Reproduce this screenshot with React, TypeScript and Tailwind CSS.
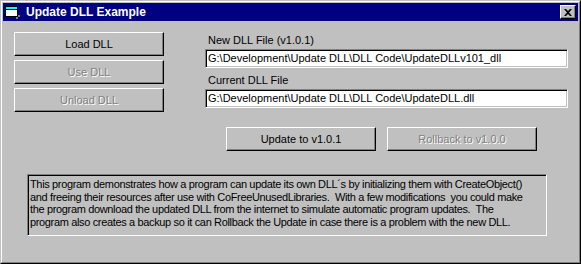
import React from "react";

const raised =
  "border border-t-white border-l-white border-r-black border-b-black shadow-[inset_-1px_-1px_0_#808080] bg-[#c0c0c0]";
const sunken =
  "border border-t-[#808080] border-l-[#808080] border-r-white border-b-white shadow-[inset_1px_1px_0_#000,inset_-1px_-1px_0_#c0c0c0]";

function Button({ label, disabled, className = "" }: { label: string; disabled?: boolean; className?: string }) {
  return (
    <div className={`${raised} flex items-center justify-center ${className}`}>
      <span
        className={
          disabled
            ? "text-[#808080] [text-shadow:1px_1px_0_#fff]"
            : "text-black"
        }
      >
        {label}
      </span>
    </div>
  );
}

function TitleIcon() {
  return (
    <svg width="16" height="14" viewBox="0 0 16 14" className="shrink-0">
      <rect x="0.5" y="1.5" width="12" height="10" fill="#fff" stroke="#000" />
      <rect x="1" y="2" width="11" height="2" fill="#00ffff" />
      <line x1="1" y1="4.5" x2="12" y2="4.5" stroke="#000" />
      <rect x="13" y="10" width="2" height="2" fill="#808080" />
      <rect x="11" y="12" width="2" height="2" fill="#808080" />
    </svg>
  );
}

const lines = [
  "This program demonstrates how a program can update its own DLL´s by initializing them with CreateObject()",
  "and freeing their resources after use with CoFreeUnusedLibraries.\u00a0 With a few modifications\u00a0 you could make",
  "the program download the updated DLL from the internet to simulate automatic program updates.\u00a0 The",
  "program also creates a backup so it can Rollback the Update in case there is a problem with the new DLL.",
];

export default function App() {
  return (
    <div className="w-[581px] h-[264px] bg-[#c0c0c0] font-['Liberation_Sans',Arial,sans-serif] text-[11px] text-black">
      <div className="w-full h-full border border-t-[#c0c0c0] border-l-[#c0c0c0] border-r-black border-b-black">
        <div className="w-full h-full border border-t-white border-l-white border-r-[#808080] border-b-[#808080] p-px flex flex-col">
          {/* Title bar */}
          <div className="h-[18px] bg-[#000080] flex items-center pl-[2px] pr-[2px]">
            <TitleIcon />
            <span className="ml-[5px] text-white font-bold text-[12px]">
              Update DLL Example
            </span>
            <div className="ml-auto w-[16px] h-[14px] border border-t-white border-l-white border-r-black border-b-black shadow-[inset_-1px_-1px_0_#808080] bg-[#c0c0c0] flex items-center justify-center">
              <svg width="8" height="7" viewBox="0 0 8 7">
                <path d="M0 0h2l2 2 2-2h2L5 3.5 8 7H6L4 5 2 7H0l3-3.5z" fill="#000" />
              </svg>
            </div>
          </div>

          {/* Body */}
          <div className="flex">
            <div className="ml-[11px] mt-[11px] flex flex-col gap-[4px]">
              <Button label="Load DLL" className="w-[150px] h-[24px]" />
              <Button label="Use DLL" disabled className="w-[150px] h-[24px]" />
              <Button label="Unload DLL" disabled className="w-[150px] h-[24px]" />
            </div>
            <div className="ml-[41px] mt-[13px] flex flex-col">
              <div className="h-[13px] leading-[13px] pl-[3px]">New DLL File (v1.0.1)</div>
              <div className={`${sunken} mt-[2px] w-[363px] h-[19px] bg-white flex items-center pl-[2px]`}>
                G:\Development\Update DLL\DLL Code\UpdateDLLv101_dll
              </div>
              <div className="h-[13px] leading-[13px] pl-[3px] mt-[6px]">Current DLL File</div>
              <div className={`${sunken} mt-[2px] w-[363px] h-[19px] bg-white flex items-center pl-[2px]`}>
                G:\Development\Update DLL\DLL Code\UpdateDLL.dll
              </div>
              <div className="flex gap-[11px] ml-[21px] mt-[19px]">
                <Button label="Update to v1.0.1" className="w-[150px] h-[24px]" />
                <Button label="Rollback to v1.0.0" disabled className="w-[150px] h-[24px]" />
              </div>
            </div>
          </div>

          <div className={`${sunken} ml-[24px] mt-[23px] w-[520px] h-[62px] pl-[2px] pt-[3px] leading-[12.5px] overflow-hidden whitespace-nowrap tracking-[-0.35px]`}>
            {lines.map((l) => (
              <div key={l}>{l}</div>
            ))}
          </div>
        </div>
      </div>
    </div>
  );
}
